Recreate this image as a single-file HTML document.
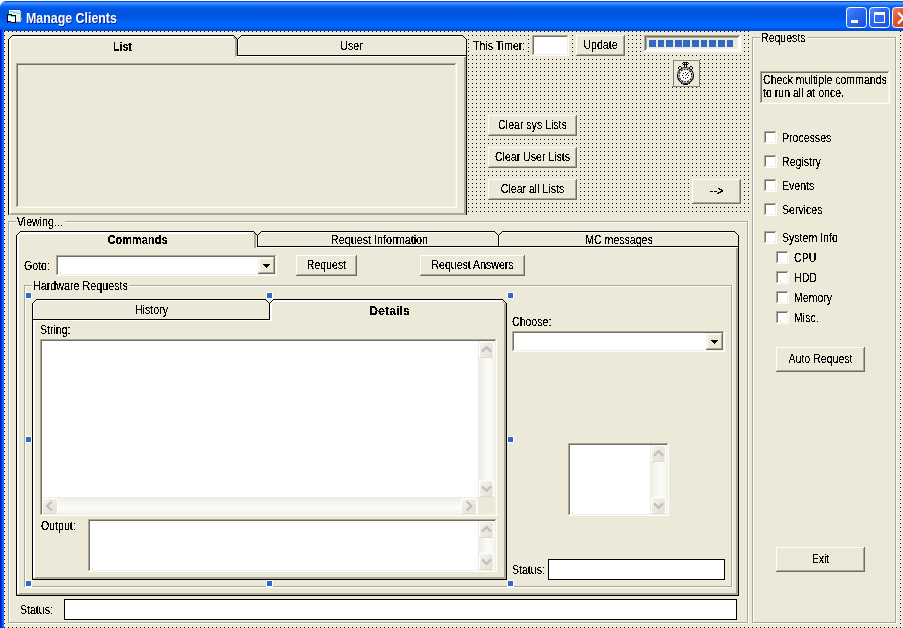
<!DOCTYPE html>
<html><head><meta charset="utf-8"><style>*{margin:0;padding:0;box-sizing:border-box}
html,body{width:903px;height:628px;overflow:hidden;background:#fff}
body{position:relative;font-family:"Liberation Sans",sans-serif}
svg{position:absolute;left:0;top:0}
.t{position:absolute;white-space:nowrap;color:#000;font-size:12px;line-height:13px;transform:scaleX(.88);transform-origin:0 0}
.c{transform-origin:50% 0}
#title{position:absolute;left:0;top:1px;width:903px;height:30px;border-radius:6px 0 0 0;
background:linear-gradient(to bottom,#0046E6 0px,#0046E6 1px,#3A8CFF 1px,#3E8EFF 3px,#1A76FA 4px,#0A62EE 5.5px,#0056E2 8px,#0054DE 14px,#0058E6 17px,#0062F8 21px,#0066FF 25px,#0062FA 27px,#0052DE 28px,#0046CC 30px)}
#lb{position:absolute;left:0;top:30px;width:4px;height:598px;background:linear-gradient(to right,#0018CC 0,#0018CC 1px,#0032E0 1px,#0032E0 2px,#0A5CF2 2px,#0A5CF2 3px,#1A6EFC 3px)}
</style></head><body>
<div id="title"></div>
<div id="lb"></div>
<svg width="903" height="628" shape-rendering="crispEdges">
<defs>
<pattern id="grid" x="4" y="31" width="4" height="4" patternUnits="userSpaceOnUse"><rect x="0" y="0" width="1" height="1" fill="#000"/></pattern>
<linearGradient id="sbg" x1="0" y1="0" x2="1" y2="1"><stop offset="0" stop-color="#F3F2EC"/><stop offset="1" stop-color="#E2E0D6"/></linearGradient>
<linearGradient id="vtr" x1="0" y1="0" x2="1" y2="0"><stop offset="0" stop-color="#EDEBE3"/><stop offset="0.6" stop-color="#FCFCF9"/><stop offset="1" stop-color="#F4F3EE"/></linearGradient>
<linearGradient id="htr" x1="0" y1="0" x2="0" y2="1"><stop offset="0" stop-color="#EDEBE3"/><stop offset="0.6" stop-color="#FCFCF9"/><stop offset="1" stop-color="#F4F3EE"/></linearGradient>
<linearGradient id="bb" x1="0" y1="0" x2="1" y2="1"><stop offset="0" stop-color="#5C91FF"/><stop offset="0.35" stop-color="#2E6CF5"/><stop offset="1" stop-color="#1A50D8"/></linearGradient>
<linearGradient id="rb" x1="0" y1="0" x2="1" y2="1"><stop offset="0" stop-color="#F08A6A"/><stop offset="0.35" stop-color="#E05A36"/><stop offset="1" stop-color="#C03A18"/></linearGradient>
</defs>
<rect x="4" y="31" width="899" height="597" fill="#ECE9D8"/><rect x="4" y="31" width="899" height="597" fill="url(#grid)"/><rect x="8" y="35" width="459" height="180" fill="#ECE9D8"/><rect x="12" y="35" width="222" height="1" fill="#000000"/><rect x="11" y="36" width="1" height="1" fill="#000000"/><rect x="10" y="37" width="1" height="1" fill="#000000"/><rect x="9" y="38" width="1" height="1" fill="#000000"/><rect x="8" y="39" width="1" height="176" fill="#000000"/><rect x="12" y="36" width="223" height="1" fill="#FFFFFF"/><rect x="12" y="37" width="222" height="1" fill="#FFFFFF"/><rect x="11" y="37" width="1" height="1" fill="#FFFFFF"/><rect x="10" y="38" width="1" height="1" fill="#FFFFFF"/><rect x="11" y="38" width="1" height="1" fill="#FFFFFF"/><rect x="10" y="39" width="1" height="1" fill="#FFFFFF"/><rect x="9" y="39" width="1" height="174" fill="#FFFFFF"/><rect x="10" y="40" width="1" height="173" fill="#FFFFFF"/><rect x="234" y="36" width="1" height="1" fill="#000000"/><rect x="235" y="37" width="1" height="1" fill="#000000"/><rect x="236" y="38" width="1" height="1" fill="#000000"/><rect x="234" y="37" width="1" height="1" fill="#ACA899"/><rect x="235" y="38" width="1" height="1" fill="#ACA899"/><rect x="233" y="37" width="1" height="1" fill="#ACA899"/><rect x="234" y="38" width="1" height="1" fill="#ACA899"/><rect x="235" y="39" width="1" height="18" fill="#ACA899"/><rect x="236" y="39" width="1" height="18" fill="#ACA899"/><rect x="237" y="39" width="1" height="17" fill="#000000"/><rect x="238" y="38" width="1" height="1" fill="#000000"/><rect x="239" y="37" width="1" height="1" fill="#000000"/><rect x="240" y="36" width="1" height="1" fill="#000000"/><rect x="241" y="35" width="222" height="1" fill="#000000"/><rect x="463" y="36" width="1" height="1" fill="#000000"/><rect x="464" y="37" width="1" height="1" fill="#000000"/><rect x="465" y="38" width="1" height="1" fill="#000000"/><rect x="466" y="39" width="1" height="176" fill="#000000"/><rect x="241" y="36" width="221" height="1" fill="#FFFFFF"/><rect x="238" y="39" width="1" height="16" fill="#FFFFFF"/><rect x="237" y="55" width="230" height="1" fill="#000000"/><rect x="236" y="56" width="230" height="1" fill="#FFFFFF"/><rect x="464" y="57" width="1" height="158" fill="#ACA899"/><rect x="465" y="57" width="1" height="158" fill="#ACA899"/><rect x="11" y="213" width="455" height="1" fill="#ACA899"/><rect x="10" y="214" width="456" height="1" fill="#ACA899"/><rect x="16" y="63" width="441" height="145" fill="#ECE9D8"/><rect x="16" y="63" width="441" height="1" fill="#ACA899"/><rect x="16" y="63" width="1" height="145" fill="#ACA899"/><rect x="17" y="64" width="439" height="1" fill="#716F64"/><rect x="17" y="64" width="1" height="143" fill="#716F64"/><rect x="16" y="207" width="441" height="1" fill="#FFFFFF"/><rect x="456" y="63" width="1" height="145" fill="#FFFFFF"/><rect x="17" y="206" width="439" height="1" fill="#F1EFE2"/><rect x="455" y="64" width="1" height="143" fill="#F1EFE2"/><rect x="469" y="36" width="59" height="19" fill="#ECE9D8"/><rect x="532" y="35" width="37" height="21" fill="#FFFFFF"/><rect x="532" y="35" width="37" height="1" fill="#ACA899"/><rect x="532" y="35" width="1" height="21" fill="#ACA899"/><rect x="533" y="36" width="35" height="1" fill="#716F64"/><rect x="533" y="36" width="1" height="19" fill="#716F64"/><rect x="532" y="55" width="37" height="1" fill="#FFFFFF"/><rect x="568" y="35" width="1" height="21" fill="#FFFFFF"/><rect x="533" y="54" width="35" height="1" fill="#F1EFE2"/><rect x="567" y="36" width="1" height="19" fill="#F1EFE2"/><rect x="576" y="35" width="49" height="21" fill="#ECE9D8"/><rect x="576" y="35" width="49" height="1" fill="#FFFFFF"/><rect x="576" y="35" width="1" height="21" fill="#FFFFFF"/><rect x="576" y="55" width="49" height="1" fill="#716F64"/><rect x="624" y="35" width="1" height="21" fill="#716F64"/><rect x="577" y="54" width="47" height="1" fill="#ACA899"/><rect x="623" y="36" width="1" height="19" fill="#ACA899"/><rect x="644" y="35" width="97" height="17" fill="#ECE9D8"/><rect x="644" y="35" width="96" height="1" fill="#ACA899"/><rect x="644" y="35" width="1" height="16" fill="#ACA899"/><rect x="645" y="36" width="94" height="1" fill="#716F64"/><rect x="645" y="36" width="1" height="14" fill="#716F64"/><rect x="646" y="37" width="92" height="1" fill="#ACA899"/><rect x="646" y="37" width="1" height="12" fill="#ACA899"/><rect x="644" y="51" width="97" height="1" fill="#FFFFFF"/><rect x="740" y="35" width="1" height="17" fill="#FFFFFF"/><rect x="645" y="50" width="95" height="1" fill="#FFFFFF"/><rect x="739" y="36" width="1" height="15" fill="#FFFFFF"/><rect x="646" y="49" width="93" height="1" fill="#FFFFFF"/><rect x="738" y="37" width="1" height="13" fill="#FFFFFF"/><rect x="647" y="48" width="91" height="1" fill="#F1EFE2"/><rect x="737" y="38" width="1" height="11" fill="#F1EFE2"/><rect x="649" y="40" width="7" height="7" fill="#316AC5"/><rect x="658" y="40" width="6" height="7" fill="#316AC5"/><rect x="666" y="40" width="7" height="7" fill="#316AC5"/><rect x="675" y="40" width="7" height="7" fill="#316AC5"/><rect x="683" y="40" width="7" height="7" fill="#316AC5"/><rect x="692" y="40" width="7" height="7" fill="#316AC5"/><rect x="701" y="40" width="6" height="7" fill="#316AC5"/><rect x="709" y="40" width="7" height="7" fill="#316AC5"/><rect x="718" y="40" width="7" height="7" fill="#316AC5"/><rect x="727" y="40" width="6" height="7" fill="#316AC5"/><rect x="672" y="59" width="28" height="28" fill="#ECE9D8"/><rect x="673" y="60" width="27" height="1" fill="#8C8979"/><rect x="673" y="60" width="1" height="27" fill="#817E6F"/><rect x="672" y="86" width="28" height="1" fill="#8C8979"/><rect x="699" y="60" width="1" height="27" fill="#817E6F"/><rect x="488" y="115" width="89" height="21" fill="#ECE9D8"/><rect x="488" y="115" width="89" height="1" fill="#FFFFFF"/><rect x="488" y="115" width="1" height="21" fill="#FFFFFF"/><rect x="488" y="135" width="89" height="1" fill="#716F64"/><rect x="576" y="115" width="1" height="21" fill="#716F64"/><rect x="489" y="134" width="87" height="1" fill="#ACA899"/><rect x="575" y="116" width="1" height="19" fill="#ACA899"/><rect x="488" y="147" width="89" height="21" fill="#ECE9D8"/><rect x="488" y="147" width="89" height="1" fill="#FFFFFF"/><rect x="488" y="147" width="1" height="21" fill="#FFFFFF"/><rect x="488" y="167" width="89" height="1" fill="#716F64"/><rect x="576" y="147" width="1" height="21" fill="#716F64"/><rect x="489" y="166" width="87" height="1" fill="#ACA899"/><rect x="575" y="148" width="1" height="19" fill="#ACA899"/><rect x="488" y="179" width="89" height="21" fill="#ECE9D8"/><rect x="488" y="179" width="89" height="1" fill="#FFFFFF"/><rect x="488" y="179" width="1" height="21" fill="#FFFFFF"/><rect x="488" y="199" width="89" height="1" fill="#716F64"/><rect x="576" y="179" width="1" height="21" fill="#716F64"/><rect x="489" y="198" width="87" height="1" fill="#ACA899"/><rect x="575" y="180" width="1" height="19" fill="#ACA899"/><rect x="692" y="179" width="49" height="25" fill="#ECE9D8"/><rect x="692" y="179" width="49" height="1" fill="#FFFFFF"/><rect x="692" y="179" width="1" height="25" fill="#FFFFFF"/><rect x="692" y="203" width="49" height="1" fill="#716F64"/><rect x="740" y="179" width="1" height="25" fill="#716F64"/><rect x="693" y="202" width="47" height="1" fill="#ACA899"/><rect x="739" y="180" width="1" height="23" fill="#ACA899"/><rect x="749" y="31" width="150" height="596" fill="#ECE9D8"/><rect x="752" y="37" width="144" height="1" fill="#ACA899"/><rect x="752" y="37" width="1" height="586" fill="#ACA899"/><rect x="753" y="38" width="142" height="1" fill="#FFFFFF"/><rect x="753" y="38" width="1" height="584" fill="#FFFFFF"/><rect x="752" y="622" width="144" height="1" fill="#ACA899"/><rect x="895" y="37" width="1" height="586" fill="#ACA899"/><rect x="752" y="623" width="145" height="1" fill="#FFFFFF"/><rect x="896" y="37" width="1" height="587" fill="#FFFFFF"/><rect x="760" y="32" width="48" height="13" fill="#ECE9D8"/><rect x="760" y="71" width="130" height="33" fill="#ECE9D8"/><rect x="760" y="71" width="130" height="1" fill="#ACA899"/><rect x="760" y="71" width="1" height="33" fill="#ACA899"/><rect x="761" y="72" width="128" height="1" fill="#716F64"/><rect x="761" y="72" width="1" height="31" fill="#716F64"/><rect x="760" y="103" width="130" height="1" fill="#FFFFFF"/><rect x="889" y="71" width="1" height="33" fill="#FFFFFF"/><rect x="761" y="102" width="128" height="1" fill="#F1EFE2"/><rect x="888" y="72" width="1" height="31" fill="#F1EFE2"/><rect x="764" y="131" width="13" height="13" fill="#FFFFFF"/><rect x="764" y="131" width="13" height="1" fill="#ACA899"/><rect x="764" y="131" width="1" height="13" fill="#ACA899"/><rect x="765" y="132" width="11" height="1" fill="#716F64"/><rect x="765" y="132" width="1" height="11" fill="#716F64"/><rect x="764" y="143" width="13" height="1" fill="#FFFFFF"/><rect x="776" y="131" width="1" height="13" fill="#FFFFFF"/><rect x="765" y="142" width="11" height="1" fill="#F1EFE2"/><rect x="775" y="132" width="1" height="11" fill="#F1EFE2"/><rect x="764" y="155" width="13" height="13" fill="#FFFFFF"/><rect x="764" y="155" width="13" height="1" fill="#ACA899"/><rect x="764" y="155" width="1" height="13" fill="#ACA899"/><rect x="765" y="156" width="11" height="1" fill="#716F64"/><rect x="765" y="156" width="1" height="11" fill="#716F64"/><rect x="764" y="167" width="13" height="1" fill="#FFFFFF"/><rect x="776" y="155" width="1" height="13" fill="#FFFFFF"/><rect x="765" y="166" width="11" height="1" fill="#F1EFE2"/><rect x="775" y="156" width="1" height="11" fill="#F1EFE2"/><rect x="764" y="179" width="13" height="13" fill="#FFFFFF"/><rect x="764" y="179" width="13" height="1" fill="#ACA899"/><rect x="764" y="179" width="1" height="13" fill="#ACA899"/><rect x="765" y="180" width="11" height="1" fill="#716F64"/><rect x="765" y="180" width="1" height="11" fill="#716F64"/><rect x="764" y="191" width="13" height="1" fill="#FFFFFF"/><rect x="776" y="179" width="1" height="13" fill="#FFFFFF"/><rect x="765" y="190" width="11" height="1" fill="#F1EFE2"/><rect x="775" y="180" width="1" height="11" fill="#F1EFE2"/><rect x="764" y="203" width="13" height="13" fill="#FFFFFF"/><rect x="764" y="203" width="13" height="1" fill="#ACA899"/><rect x="764" y="203" width="1" height="13" fill="#ACA899"/><rect x="765" y="204" width="11" height="1" fill="#716F64"/><rect x="765" y="204" width="1" height="11" fill="#716F64"/><rect x="764" y="215" width="13" height="1" fill="#FFFFFF"/><rect x="776" y="203" width="1" height="13" fill="#FFFFFF"/><rect x="765" y="214" width="11" height="1" fill="#F1EFE2"/><rect x="775" y="204" width="1" height="11" fill="#F1EFE2"/><rect x="764" y="231" width="13" height="13" fill="#FFFFFF"/><rect x="764" y="231" width="13" height="1" fill="#ACA899"/><rect x="764" y="231" width="1" height="13" fill="#ACA899"/><rect x="765" y="232" width="11" height="1" fill="#716F64"/><rect x="765" y="232" width="1" height="11" fill="#716F64"/><rect x="764" y="243" width="13" height="1" fill="#FFFFFF"/><rect x="776" y="231" width="1" height="13" fill="#FFFFFF"/><rect x="765" y="242" width="11" height="1" fill="#F1EFE2"/><rect x="775" y="232" width="1" height="11" fill="#F1EFE2"/><rect x="776" y="251" width="13" height="13" fill="#FFFFFF"/><rect x="776" y="251" width="13" height="1" fill="#ACA899"/><rect x="776" y="251" width="1" height="13" fill="#ACA899"/><rect x="777" y="252" width="11" height="1" fill="#716F64"/><rect x="777" y="252" width="1" height="11" fill="#716F64"/><rect x="776" y="263" width="13" height="1" fill="#FFFFFF"/><rect x="788" y="251" width="1" height="13" fill="#FFFFFF"/><rect x="777" y="262" width="11" height="1" fill="#F1EFE2"/><rect x="787" y="252" width="1" height="11" fill="#F1EFE2"/><rect x="776" y="271" width="13" height="13" fill="#FFFFFF"/><rect x="776" y="271" width="13" height="1" fill="#ACA899"/><rect x="776" y="271" width="1" height="13" fill="#ACA899"/><rect x="777" y="272" width="11" height="1" fill="#716F64"/><rect x="777" y="272" width="1" height="11" fill="#716F64"/><rect x="776" y="283" width="13" height="1" fill="#FFFFFF"/><rect x="788" y="271" width="1" height="13" fill="#FFFFFF"/><rect x="777" y="282" width="11" height="1" fill="#F1EFE2"/><rect x="787" y="272" width="1" height="11" fill="#F1EFE2"/><rect x="776" y="291" width="13" height="13" fill="#FFFFFF"/><rect x="776" y="291" width="13" height="1" fill="#ACA899"/><rect x="776" y="291" width="1" height="13" fill="#ACA899"/><rect x="777" y="292" width="11" height="1" fill="#716F64"/><rect x="777" y="292" width="1" height="11" fill="#716F64"/><rect x="776" y="303" width="13" height="1" fill="#FFFFFF"/><rect x="788" y="291" width="1" height="13" fill="#FFFFFF"/><rect x="777" y="302" width="11" height="1" fill="#F1EFE2"/><rect x="787" y="292" width="1" height="11" fill="#F1EFE2"/><rect x="776" y="311" width="13" height="13" fill="#FFFFFF"/><rect x="776" y="311" width="13" height="1" fill="#ACA899"/><rect x="776" y="311" width="1" height="13" fill="#ACA899"/><rect x="777" y="312" width="11" height="1" fill="#716F64"/><rect x="777" y="312" width="1" height="11" fill="#716F64"/><rect x="776" y="323" width="13" height="1" fill="#FFFFFF"/><rect x="788" y="311" width="1" height="13" fill="#FFFFFF"/><rect x="777" y="322" width="11" height="1" fill="#F1EFE2"/><rect x="787" y="312" width="1" height="11" fill="#F1EFE2"/><rect x="776" y="347" width="89" height="25" fill="#ECE9D8"/><rect x="776" y="347" width="89" height="1" fill="#FFFFFF"/><rect x="776" y="347" width="1" height="25" fill="#FFFFFF"/><rect x="776" y="371" width="89" height="1" fill="#716F64"/><rect x="864" y="347" width="1" height="25" fill="#716F64"/><rect x="777" y="370" width="87" height="1" fill="#ACA899"/><rect x="863" y="348" width="1" height="23" fill="#ACA899"/><rect x="776" y="547" width="89" height="25" fill="#ECE9D8"/><rect x="776" y="547" width="89" height="1" fill="#FFFFFF"/><rect x="776" y="547" width="1" height="25" fill="#FFFFFF"/><rect x="776" y="571" width="89" height="1" fill="#716F64"/><rect x="864" y="547" width="1" height="25" fill="#716F64"/><rect x="777" y="570" width="87" height="1" fill="#ACA899"/><rect x="863" y="548" width="1" height="23" fill="#ACA899"/><rect x="5" y="215" width="744" height="412" fill="#ECE9D8"/><rect x="8" y="221" width="740" height="1" fill="#ACA899"/><rect x="8" y="221" width="1" height="402" fill="#ACA899"/><rect x="9" y="222" width="738" height="1" fill="#FFFFFF"/><rect x="9" y="222" width="1" height="400" fill="#FFFFFF"/><rect x="8" y="622" width="740" height="1" fill="#ACA899"/><rect x="747" y="221" width="1" height="402" fill="#ACA899"/><rect x="8" y="623" width="741" height="1" fill="#FFFFFF"/><rect x="748" y="221" width="1" height="403" fill="#FFFFFF"/><rect x="16" y="216" width="49" height="12" fill="#ECE9D8"/><rect x="16" y="231" width="723" height="365" fill="#ECE9D8"/><rect x="20" y="231" width="234" height="1" fill="#000000"/><rect x="19" y="232" width="1" height="1" fill="#000000"/><rect x="18" y="233" width="1" height="1" fill="#000000"/><rect x="17" y="234" width="1" height="1" fill="#000000"/><rect x="16" y="235" width="1" height="360" fill="#000000"/><rect x="20" y="232" width="235" height="1" fill="#FFFFFF"/><rect x="20" y="233" width="234" height="1" fill="#FFFFFF"/><rect x="19" y="233" width="1" height="1" fill="#FFFFFF"/><rect x="18" y="234" width="1" height="1" fill="#FFFFFF"/><rect x="19" y="234" width="1" height="1" fill="#FFFFFF"/><rect x="18" y="235" width="1" height="1" fill="#FFFFFF"/><rect x="17" y="235" width="1" height="359" fill="#FFFFFF"/><rect x="18" y="236" width="1" height="358" fill="#FFFFFF"/><rect x="254" y="232" width="1" height="1" fill="#000000"/><rect x="255" y="233" width="1" height="1" fill="#000000"/><rect x="256" y="234" width="1" height="1" fill="#000000"/><rect x="254" y="233" width="1" height="1" fill="#ACA899"/><rect x="255" y="234" width="1" height="1" fill="#ACA899"/><rect x="253" y="233" width="1" height="1" fill="#ACA899"/><rect x="254" y="234" width="1" height="1" fill="#ACA899"/><rect x="254" y="235" width="1" height="13" fill="#ACA899"/><rect x="255" y="235" width="1" height="13" fill="#ACA899"/><rect x="257" y="235" width="1" height="12" fill="#000000"/><rect x="258" y="234" width="1" height="1" fill="#000000"/><rect x="259" y="233" width="1" height="1" fill="#000000"/><rect x="260" y="232" width="1" height="1" fill="#000000"/><rect x="261" y="231" width="234" height="1" fill="#000000"/><rect x="495" y="232" width="1" height="1" fill="#000000"/><rect x="496" y="233" width="1" height="1" fill="#000000"/><rect x="497" y="234" width="1" height="1" fill="#000000"/><rect x="498" y="235" width="1" height="12" fill="#000000"/><rect x="261" y="232" width="233" height="1" fill="#FFFFFF"/><rect x="258" y="235" width="1" height="11" fill="#FFFFFF"/><rect x="499" y="234" width="1" height="1" fill="#000000"/><rect x="500" y="233" width="1" height="1" fill="#000000"/><rect x="501" y="232" width="1" height="1" fill="#000000"/><rect x="502" y="231" width="233" height="1" fill="#000000"/><rect x="735" y="232" width="1" height="1" fill="#000000"/><rect x="736" y="233" width="1" height="1" fill="#000000"/><rect x="737" y="234" width="1" height="1" fill="#000000"/><rect x="738" y="235" width="1" height="361" fill="#000000"/><rect x="502" y="232" width="232" height="1" fill="#FFFFFF"/><rect x="499" y="235" width="1" height="11" fill="#FFFFFF"/><rect x="257" y="246" width="482" height="1" fill="#000000"/><rect x="256" y="247" width="482" height="1" fill="#FFFFFF"/><rect x="736" y="248" width="1" height="347" fill="#ACA899"/><rect x="737" y="248" width="1" height="347" fill="#ACA899"/><rect x="19" y="593" width="719" height="1" fill="#ACA899"/><rect x="17" y="594" width="721" height="1" fill="#ACA899"/><rect x="16" y="595" width="723" height="1" fill="#000000"/><rect x="56" y="255" width="221" height="21" fill="#FFFFFF"/><rect x="56" y="255" width="221" height="1" fill="#ACA899"/><rect x="56" y="255" width="1" height="21" fill="#ACA899"/><rect x="57" y="256" width="219" height="1" fill="#716F64"/><rect x="57" y="256" width="1" height="19" fill="#716F64"/><rect x="56" y="275" width="221" height="1" fill="#FFFFFF"/><rect x="276" y="255" width="1" height="21" fill="#FFFFFF"/><rect x="57" y="274" width="219" height="1" fill="#F1EFE2"/><rect x="275" y="256" width="1" height="19" fill="#F1EFE2"/><rect x="258" y="257" width="17" height="17" fill="#ECE9D8"/><rect x="258" y="257" width="17" height="1" fill="#F1EFE2"/><rect x="258" y="257" width="1" height="17" fill="#F1EFE2"/><rect x="259" y="258" width="15" height="1" fill="#FFFFFF"/><rect x="259" y="258" width="1" height="15" fill="#FFFFFF"/><rect x="258" y="273" width="17" height="1" fill="#716F64"/><rect x="274" y="257" width="1" height="17" fill="#716F64"/><rect x="259" y="272" width="15" height="1" fill="#ACA899"/><rect x="273" y="258" width="1" height="15" fill="#ACA899"/><rect x="263" y="264" width="7" height="1" fill="#000000"/><rect x="264" y="265" width="5" height="1" fill="#000000"/><rect x="265" y="266" width="3" height="1" fill="#000000"/><rect x="266" y="267" width="1" height="1" fill="#000000"/><rect x="296" y="255" width="61" height="21" fill="#ECE9D8"/><rect x="296" y="255" width="61" height="1" fill="#FFFFFF"/><rect x="296" y="255" width="1" height="21" fill="#FFFFFF"/><rect x="296" y="275" width="61" height="1" fill="#716F64"/><rect x="356" y="255" width="1" height="21" fill="#716F64"/><rect x="297" y="274" width="59" height="1" fill="#ACA899"/><rect x="355" y="256" width="1" height="19" fill="#ACA899"/><rect x="420" y="255" width="105" height="21" fill="#ECE9D8"/><rect x="420" y="255" width="105" height="1" fill="#FFFFFF"/><rect x="420" y="255" width="1" height="21" fill="#FFFFFF"/><rect x="420" y="275" width="105" height="1" fill="#716F64"/><rect x="524" y="255" width="1" height="21" fill="#716F64"/><rect x="421" y="274" width="103" height="1" fill="#ACA899"/><rect x="523" y="256" width="1" height="19" fill="#ACA899"/><rect x="24" y="285" width="708" height="1" fill="#ACA899"/><rect x="24" y="285" width="1" height="302" fill="#ACA899"/><rect x="25" y="286" width="706" height="1" fill="#FFFFFF"/><rect x="25" y="286" width="1" height="300" fill="#FFFFFF"/><rect x="24" y="586" width="708" height="1" fill="#ACA899"/><rect x="731" y="285" width="1" height="302" fill="#ACA899"/><rect x="24" y="587" width="709" height="1" fill="#FFFFFF"/><rect x="732" y="285" width="1" height="303" fill="#FFFFFF"/><rect x="32" y="280" width="97" height="12" fill="#ECE9D8"/><rect x="32" y="299" width="475" height="281" fill="#ECE9D8"/><rect x="36" y="299" width="230" height="1" fill="#000000"/><rect x="35" y="300" width="1" height="1" fill="#000000"/><rect x="34" y="301" width="1" height="1" fill="#000000"/><rect x="33" y="302" width="1" height="1" fill="#000000"/><rect x="32" y="303" width="1" height="277" fill="#000000"/><rect x="36" y="300" width="229" height="1" fill="#FFFFFF"/><rect x="35" y="301" width="1" height="1" fill="#FFFFFF"/><rect x="34" y="302" width="1" height="1" fill="#FFFFFF"/><rect x="33" y="303" width="1" height="276" fill="#FFFFFF"/><rect x="34" y="321" width="1" height="258" fill="#FFFFFF"/><rect x="266" y="300" width="1" height="1" fill="#000000"/><rect x="267" y="301" width="1" height="1" fill="#000000"/><rect x="268" y="302" width="1" height="1" fill="#000000"/><rect x="269" y="303" width="1" height="17" fill="#000000"/><rect x="270" y="302" width="1" height="1" fill="#000000"/><rect x="271" y="301" width="1" height="1" fill="#000000"/><rect x="272" y="300" width="1" height="1" fill="#000000"/><rect x="273" y="299" width="230" height="1" fill="#000000"/><rect x="503" y="300" width="1" height="1" fill="#000000"/><rect x="504" y="301" width="1" height="1" fill="#000000"/><rect x="505" y="302" width="1" height="1" fill="#000000"/><rect x="506" y="303" width="1" height="277" fill="#000000"/><rect x="273" y="300" width="230" height="1" fill="#FFFFFF"/><rect x="273" y="301" width="229" height="1" fill="#FFFFFF"/><rect x="270" y="303" width="1" height="18" fill="#FFFFFF"/><rect x="271" y="303" width="1" height="18" fill="#FFFFFF"/><rect x="271" y="302" width="1" height="1" fill="#FFFFFF"/><rect x="272" y="301" width="1" height="1" fill="#FFFFFF"/><rect x="272" y="302" width="1" height="1" fill="#FFFFFF"/><rect x="504" y="303" width="1" height="276" fill="#ACA899"/><rect x="505" y="303" width="1" height="276" fill="#ACA899"/><rect x="502" y="301" width="1" height="1" fill="#ACA899"/><rect x="503" y="302" width="1" height="1" fill="#ACA899"/><rect x="32" y="319" width="238" height="1" fill="#000000"/><rect x="33" y="320" width="237" height="1" fill="#FFFFFF"/><rect x="35" y="577" width="471" height="1" fill="#ACA899"/><rect x="33" y="578" width="473" height="1" fill="#ACA899"/><rect x="32" y="579" width="475" height="1" fill="#000000"/><rect x="40" y="339" width="457" height="177" fill="#FFFFFF"/><rect x="40" y="339" width="457" height="1" fill="#ACA899"/><rect x="40" y="339" width="1" height="177" fill="#ACA899"/><rect x="41" y="340" width="455" height="1" fill="#716F64"/><rect x="41" y="340" width="1" height="175" fill="#716F64"/><rect x="40" y="515" width="457" height="1" fill="#FFFFFF"/><rect x="496" y="339" width="1" height="177" fill="#FFFFFF"/><rect x="41" y="514" width="455" height="1" fill="#F1EFE2"/><rect x="495" y="340" width="1" height="175" fill="#F1EFE2"/><rect x="478" y="341" width="17" height="156" fill="url(#vtr)"/><rect x="479" y="341" width="15" height="17" rx="2.5" fill="#FFFFFF" shape-rendering="auto"/><rect x="480" y="342" width="13" height="15" rx="2" fill="url(#sbg)" shape-rendering="auto"/><rect x="480" y="357" width="13" height="1" fill="#DEDBCB"/><rect x="479" y="480" width="15" height="17" rx="2.5" fill="#FFFFFF" shape-rendering="auto"/><rect x="480" y="481" width="13" height="15" rx="2" fill="url(#sbg)" shape-rendering="auto"/><rect x="480" y="496" width="13" height="1" fill="#DEDBCB"/><rect x="42" y="497" width="436" height="17" fill="url(#htr)"/><rect x="42" y="498" width="16" height="16" rx="2.5" fill="#FFFFFF" shape-rendering="auto"/><rect x="43" y="499" width="14" height="14" rx="2" fill="url(#sbg)" shape-rendering="auto"/><rect x="43" y="513" width="14" height="1" fill="#DEDBCB"/><rect x="461" y="498" width="16" height="16" rx="2.5" fill="#FFFFFF" shape-rendering="auto"/><rect x="462" y="499" width="14" height="14" rx="2" fill="url(#sbg)" shape-rendering="auto"/><rect x="462" y="513" width="14" height="1" fill="#DEDBCB"/><rect x="478" y="497" width="17" height="17" fill="#ECE9D8"/><rect x="88" y="519" width="409" height="53" fill="#FFFFFF"/><rect x="88" y="519" width="409" height="1" fill="#ACA899"/><rect x="88" y="519" width="1" height="53" fill="#ACA899"/><rect x="89" y="520" width="407" height="1" fill="#716F64"/><rect x="89" y="520" width="1" height="51" fill="#716F64"/><rect x="88" y="571" width="409" height="1" fill="#FFFFFF"/><rect x="496" y="519" width="1" height="53" fill="#FFFFFF"/><rect x="89" y="570" width="407" height="1" fill="#F1EFE2"/><rect x="495" y="520" width="1" height="51" fill="#F1EFE2"/><rect x="478" y="521" width="17" height="49" fill="url(#vtr)"/><rect x="479" y="521" width="15" height="17" rx="2.5" fill="#FFFFFF" shape-rendering="auto"/><rect x="480" y="522" width="13" height="15" rx="2" fill="url(#sbg)" shape-rendering="auto"/><rect x="480" y="537" width="13" height="1" fill="#DEDBCB"/><rect x="479" y="553" width="15" height="17" rx="2.5" fill="#FFFFFF" shape-rendering="auto"/><rect x="480" y="554" width="13" height="15" rx="2" fill="url(#sbg)" shape-rendering="auto"/><rect x="480" y="569" width="13" height="1" fill="#DEDBCB"/><rect x="512" y="331" width="213" height="21" fill="#FFFFFF"/><rect x="512" y="331" width="213" height="1" fill="#ACA899"/><rect x="512" y="331" width="1" height="21" fill="#ACA899"/><rect x="513" y="332" width="211" height="1" fill="#716F64"/><rect x="513" y="332" width="1" height="19" fill="#716F64"/><rect x="512" y="351" width="213" height="1" fill="#FFFFFF"/><rect x="724" y="331" width="1" height="21" fill="#FFFFFF"/><rect x="513" y="350" width="211" height="1" fill="#F1EFE2"/><rect x="723" y="332" width="1" height="19" fill="#F1EFE2"/><rect x="706" y="333" width="17" height="17" fill="#ECE9D8"/><rect x="706" y="333" width="17" height="1" fill="#F1EFE2"/><rect x="706" y="333" width="1" height="17" fill="#F1EFE2"/><rect x="707" y="334" width="15" height="1" fill="#FFFFFF"/><rect x="707" y="334" width="1" height="15" fill="#FFFFFF"/><rect x="706" y="349" width="17" height="1" fill="#716F64"/><rect x="722" y="333" width="1" height="17" fill="#716F64"/><rect x="707" y="348" width="15" height="1" fill="#ACA899"/><rect x="721" y="334" width="1" height="15" fill="#ACA899"/><rect x="711" y="340" width="7" height="1" fill="#000000"/><rect x="712" y="341" width="5" height="1" fill="#000000"/><rect x="713" y="342" width="3" height="1" fill="#000000"/><rect x="714" y="343" width="1" height="1" fill="#000000"/><rect x="568" y="443" width="101" height="73" fill="#FFFFFF"/><rect x="568" y="443" width="101" height="1" fill="#ACA899"/><rect x="568" y="443" width="1" height="73" fill="#ACA899"/><rect x="569" y="444" width="99" height="1" fill="#716F64"/><rect x="569" y="444" width="1" height="71" fill="#716F64"/><rect x="568" y="515" width="101" height="1" fill="#FFFFFF"/><rect x="668" y="443" width="1" height="73" fill="#FFFFFF"/><rect x="569" y="514" width="99" height="1" fill="#F1EFE2"/><rect x="667" y="444" width="1" height="71" fill="#F1EFE2"/><rect x="650" y="445" width="17" height="69" fill="url(#vtr)"/><rect x="651" y="445" width="15" height="17" rx="2.5" fill="#FFFFFF" shape-rendering="auto"/><rect x="652" y="446" width="13" height="15" rx="2" fill="url(#sbg)" shape-rendering="auto"/><rect x="652" y="461" width="13" height="1" fill="#DEDBCB"/><rect x="651" y="497" width="15" height="17" rx="2.5" fill="#FFFFFF" shape-rendering="auto"/><rect x="652" y="498" width="13" height="15" rx="2" fill="url(#sbg)" shape-rendering="auto"/><rect x="652" y="513" width="13" height="1" fill="#DEDBCB"/><rect x="548" y="559" width="177" height="21" fill="#000000"/><rect x="549" y="560" width="175" height="19" fill="#FFFFFF"/><rect x="25" y="292" width="7" height="7" fill="#FFFFFF"/><rect x="26" y="293" width="5" height="5" fill="#3169C6"/><rect x="266" y="292" width="7" height="7" fill="#FFFFFF"/><rect x="267" y="293" width="5" height="5" fill="#3169C6"/><rect x="507" y="292" width="7" height="7" fill="#FFFFFF"/><rect x="508" y="293" width="5" height="5" fill="#3169C6"/><rect x="25" y="436" width="7" height="7" fill="#FFFFFF"/><rect x="26" y="437" width="5" height="5" fill="#3169C6"/><rect x="507" y="436" width="7" height="7" fill="#FFFFFF"/><rect x="508" y="437" width="5" height="5" fill="#3169C6"/><rect x="25" y="580" width="7" height="7" fill="#FFFFFF"/><rect x="26" y="581" width="5" height="5" fill="#3169C6"/><rect x="266" y="580" width="7" height="7" fill="#FFFFFF"/><rect x="267" y="581" width="5" height="5" fill="#3169C6"/><rect x="507" y="580" width="7" height="7" fill="#FFFFFF"/><rect x="508" y="581" width="5" height="5" fill="#3169C6"/><rect x="64" y="599" width="673" height="21" fill="#000000"/><rect x="65" y="600" width="671" height="19" fill="#FFFFFF"/>
</svg>
<svg width="903" height="628">
<g shape-rendering="crispEdges">
<rect x="9" y="10" width="11" height="11" fill="#F6F1EC"/>
<rect x="20" y="11" width="1" height="10" fill="#D9CDBF"/><rect x="9" y="21" width="12" height="1" fill="#D9CDBF"/>
<rect x="10" y="11" width="3" height="1" fill="#1EE8F0"/><rect x="13" y="12" width="4" height="1" fill="#1EE8F0"/><rect x="17" y="13" width="3" height="1" fill="#1EE8F0"/>
<rect x="21" y="18" width="1" height="2" fill="#B89868"/>
<rect x="7" y="14" width="5" height="1" fill="#000"/><rect x="11" y="15" width="5" height="1" fill="#000"/>
<rect x="7" y="14" width="1" height="9" fill="#000"/><rect x="15" y="15" width="1" height="8" fill="#000"/>
<rect x="7" y="21" width="5" height="1" fill="#000"/><rect x="11" y="22" width="5" height="1" fill="#000"/>
<rect x="8" y="15" width="3" height="6" fill="#fff"/><rect x="11" y="16" width="4" height="6" fill="#fff"/>
<rect x="8" y="15" width="3" height="1" fill="#1EE8F0"/><rect x="11" y="16" width="4" height="1" fill="#1EE8F0"/>
</g>

<rect x="846.5" y="7.5" width="20" height="20" rx="3" fill="url(#bb)" stroke="#fff" stroke-width="1"/>
<rect x="851" y="20" width="7" height="3" fill="#fff"/>
<rect x="869.5" y="7.5" width="20" height="20" rx="3" fill="url(#bb)" stroke="#fff" stroke-width="1"/>
<rect x="874" y="12" width="11" height="11" fill="#fff"/><rect x="875" y="15" width="9" height="7" fill="#2F6AF0"/>
<rect x="892.5" y="7.5" width="20" height="20" rx="3" fill="url(#rb)" stroke="#fff" stroke-width="1"/>
<path d="M898,12.5 L909,23.5 M909,12.5 L898,23.5" stroke="#fff" stroke-width="2.2"/>


<g shape-rendering="crispEdges" fill="#000">
<rect x="683" y="62" width="5" height="1"/><rect x="682" y="63" width="1" height="1"/><rect x="684" y="63" width="1" height="1"/><rect x="686" y="63" width="1" height="1"/><rect x="688" y="63" width="1" height="1"/>
<rect x="683" y="64" width="5" height="1"/><rect x="684" y="65" width="1" height="2"/><rect x="686" y="65" width="1" height="2"/>
<rect x="679" y="66" width="2" height="1"/><rect x="678" y="67" width="1" height="2"/><rect x="681" y="67" width="1" height="2"/><rect x="679" y="69" width="2" height="1"/>
<rect x="690" y="66" width="2" height="1"/><rect x="689" y="67" width="1" height="2"/><rect x="692" y="67" width="1" height="2"/><rect x="690" y="69" width="2" height="1"/>
<rect x="683" y="68" width="5" height="1"/>
<rect x="682" y="82" width="7" height="1"/><rect x="683" y="84" width="5" height="1"/><rect x="681" y="83" width="1" height="1"/><rect x="689" y="83" width="1" height="1"/>
</g>
<g fill="none" stroke="#000">
<circle cx="685.5" cy="75.5" r="8" fill="#fff" stroke-width="1.2"/>
<circle cx="685.5" cy="75.5" r="6.3" stroke-width="1.1" stroke-dasharray="2 1"/>

<path d="M685.5,75.5 L688.5,72.5" stroke-width="1"/>
</g>
<g fill="#000" shape-rendering="crispEdges">
<rect x="685" y="72" width="1" height="1"/><rect x="685" y="78" width="1" height="1"/>
<rect x="682" y="75" width="1" height="1"/><rect x="688" y="75" width="1" height="1"/>
<rect x="683" y="73" width="1" height="1"/><rect x="683" y="77" width="1" height="1"/><rect x="687" y="77" width="1" height="1"/>
</g>

<path d="M482.0,351.7 L486.5,347.2 L491.0,351.7" fill="none" stroke="#C2C1B6" stroke-width="2.4"/><path d="M482.0,486.3 L486.5,490.8 L491.0,486.3" fill="none" stroke="#C2C1B6" stroke-width="2.4"/><path d="M51.7,501.5 L47.2,506.0 L51.7,510.5" fill="none" stroke="#C2C1B6" stroke-width="2.4"/><path d="M466.8,501.5 L471.3,506.0 L466.8,510.5" fill="none" stroke="#C2C1B6" stroke-width="2.4"/><path d="M482.0,531.7 L486.5,527.2 L491.0,531.7" fill="none" stroke="#C2C1B6" stroke-width="2.4"/><path d="M482.0,559.3 L486.5,563.8 L491.0,559.3" fill="none" stroke="#C2C1B6" stroke-width="2.4"/><path d="M654.0,455.7 L658.5,451.2 L663.0,455.7" fill="none" stroke="#C2C1B6" stroke-width="2.4"/><path d="M654.0,503.3 L658.5,507.8 L663.0,503.3" fill="none" stroke="#C2C1B6" stroke-width="2.4"/>
</svg>
<svg width="0" height="0" style="position:absolute"><filter id="bin" x="0" y="0" width="100%" height="100%" color-interpolation-filters="sRGB"><feComponentTransfer><feFuncA type="discrete" tableValues="0 0 0 0 1 1 1 1 1 1"/></feComponentTransfer></filter></svg>
<div id="txt" style="position:absolute;left:0;top:0;width:903px;height:628px;filter:url(#bin)"><div class="t c" style="left:8px;width:229px;text-align:center;top:41px;font-weight:bold;">List</div><div class="t c" style="left:237px;width:229px;text-align:center;top:40px;">User</div><div class="t" style="left:473px;top:40px;">This Timer:</div><div class="t c" style="left:576px;width:49px;text-align:center;top:39px;">Update</div><div class="t c" style="left:488px;width:89px;text-align:center;top:119px;">Clear sys Lists</div><div class="t c" style="left:488px;width:89px;text-align:center;top:151px;">Clear User Lists</div><div class="t c" style="left:488px;width:89px;text-align:center;top:183px;">Clear all Lists</div><div class="t c" style="left:692px;width:49px;text-align:center;top:185px;">--&gt;</div><div class="t" style="left:761px;top:32px;">Requests</div><div class="t" style="left:763px;top:74px;">Check multiple commands</div><div class="t" style="left:763px;top:87px;">to run all at once.</div><div class="t" style="left:782px;top:132px;">Processes</div><div class="t" style="left:782px;top:156px;">Registry</div><div class="t" style="left:782px;top:180px;">Events</div><div class="t" style="left:782px;top:204px;">Services</div><div class="t" style="left:782px;top:232px;">System Info</div><div class="t" style="left:794px;top:252px;">CPU</div><div class="t" style="left:794px;top:272px;">HDD</div><div class="t" style="left:794px;top:292px;">Memory</div><div class="t" style="left:794px;top:312px;">Misc.</div><div class="t c" style="left:776px;width:89px;text-align:center;top:353px;">Auto Request</div><div class="t c" style="left:776px;width:89px;text-align:center;top:553px;">Exit</div><div class="t" style="left:17px;top:216px;">Viewing...</div><div class="t c" style="left:17px;width:241px;text-align:center;top:234px;font-weight:bold;transform:scaleX(0.92);">Commands</div><div class="t c" style="left:259px;width:241px;text-align:center;top:234px;transform:scaleX(0.9);">Request Information</div><div class="t c" style="left:499px;width:240px;text-align:center;top:234px;">MC messages</div><div class="t" style="left:24px;top:260px;">Goto:</div><div class="t c" style="left:296px;width:61px;text-align:center;top:259px;">Request</div><div class="t c" style="left:420px;width:105px;text-align:center;top:259px;">Request Answers</div><div class="t" style="left:33px;top:280px;transform:scaleX(0.895);">Hardware Requests</div><div class="t c" style="left:33px;width:237px;text-align:center;top:304px;">History</div><div class="t c" style="left:271px;width:237px;text-align:center;top:305px;font-weight:bold;transform:scaleX(1.04);">Details</div><div class="t" style="left:40px;top:324px;">String:</div><div class="t" style="left:41px;top:520px;">Output:</div><div class="t" style="left:512px;top:316px;">Choose:</div><div class="t" style="left:512px;top:564px;">Status:</div><div class="t" style="left:20px;top:604px;">Status:</div></div>
<div class="t" style="left:26px;top:12px;font-size:14px;font-weight:bold;color:#fff;transform:scaleX(.885);letter-spacing:0;text-shadow:1px 1px #0A1E8C">Manage Clients</div>
</body></html>
